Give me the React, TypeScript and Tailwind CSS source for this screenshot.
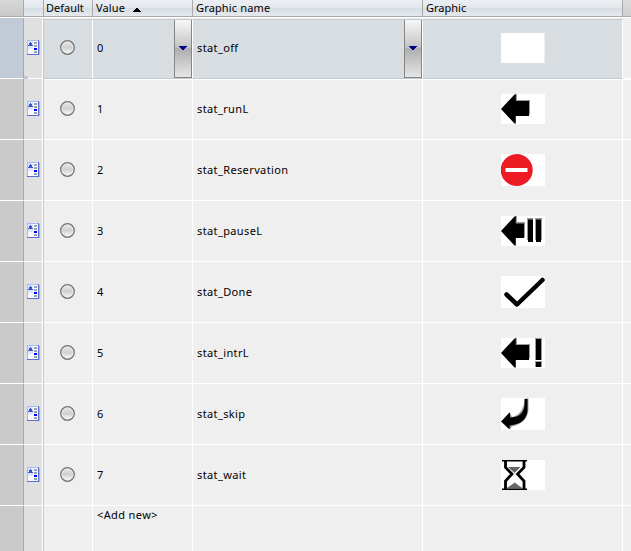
import type { ReactNode } from 'react';

const GRID = 'grid grid-cols-[24px_20px_49px_100px_230px_200px_8px]';

function ElementIcon() {
  return (
    <svg width="14" height="16" viewBox="0 0 14 16" shapeRendering="crispEdges">
      <path d="M1 15h12V1h-1v13H1z" fill="#b5b5c0" />
      <rect x="0" y="0" width="12" height="15" fill="#5b6fd0" />
      <rect x="0" y="0" width="11" height="14" fill="#a9b9f2" />
      <rect x="1" y="1" width="10" height="13" fill="#f8f9ff" />
      <rect x="1" y="1" width="5" height="8" fill="#dde5ff" />
      <path d="M3 2h1v1h1v2h1v1H1V5h1V3h1z" fill="#3d54c8" />
      <rect x="7" y="2" width="3" height="2" fill="#98a0b4" />
      <rect x="7" y="5" width="3" height="2" fill="#98a0b4" />
      <rect x="7" y="8" width="3" height="2" fill="#0000ff" />
      <rect x="7" y="11" width="3" height="2" fill="#98a0b4" />
    </svg>
  );
}

function Radio() {
  return (
    <svg width="15" height="15" viewBox="0 0 15 15">
      <defs>
        <linearGradient id="radio-fill" x1="0" y1="0" x2="0" y2="1">
          <stop offset="0" stopColor="#e4e4e4" />
          <stop offset="0.5" stopColor="#d0d0d0" />
          <stop offset="1" stopColor="#f4f4f4" />
        </linearGradient>
      </defs>
      <circle cx="7.5" cy="7.5" r="6.8" fill="#ececec" stroke="#747474" strokeWidth="1.3" />
      <circle cx="7.5" cy="7.5" r="5.2" fill="url(#radio-fill)" />
    </svg>
  );
}

function DropButton() {
  return (
    <span className="flex h-[58px] w-[18px] items-center justify-center border-x border-b border-[#858585] bg-[linear-gradient(#f8f8f8_0%,#c4c4c4_48%,#adadad_49%,#e6e6e6_100%)] pr-px pb-px">
      <svg width="8" height="4" viewBox="0 0 8 4" shapeRendering="crispEdges" className="shrink-0">
        <path d="M0 0h8v1H7v1H6v1H5v1H3V3H2V2H1V1H0z" fill="#00008b" />
      </svg>
    </span>
  );
}

const ARROW = 'M0 15L13.5 0.500H14.800V7H28V22H14.800V29.500H13.500Z';

function Graphic({ height = 30, children }: { height?: number; children?: ReactNode }) {
  return (
    <svg width="44" height={height} viewBox={`0 0 44 ${height}`} className="block bg-white">
      {children}
      {!children && <path d="M43.5 0v30" stroke="#eee" />}
    </svg>
  );
}

const rows: { name: string; graphic: ReactNode }[] = [
  { name: 'stat_off', graphic: <Graphic /> },
  {
    name: 'stat_runL',
    graphic: (
      <Graphic>
        <path d="M14 0h2v6h13v14l-2 2V9H14z" fill="#999" />
        <path d={ARROW} />
      </Graphic>
    ),
  },
  {
    name: 'stat_Reservation',
    graphic: (
      <Graphic height={32}>
        <circle cx="15.7" cy="16" r="16" fill="#ed1c24" />
        <path d="M4.500 14h22v4h-22z" fill="#fff" />
      </Graphic>
    ),
  },
  {
    name: 'stat_pauseL',
    graphic: (
      <Graphic>
        <path d="M14 0h2v6h8v15l-2 1V8h-8zM26 2h6v22h-6zM34 2h7v22h-7z" fill="#999" />
        <path d="M0 15L13.500 0.500H14.800V7.500H23V22H14.800V29.500H13.500ZM27 3.500h5v22.500H27zM35 3.500h5v22.500H35z" />
      </Graphic>
    ),
  },
  {
    name: 'stat_Done',
    graphic: (
      <Graphic height={32}>
        <path d="M5.5 18.5L16 28.5L41.5 4" fill="none" stroke="#000" strokeWidth="4.5" strokeLinecap="round" strokeLinejoin="round" />
      </Graphic>
    ),
  },
  {
    name: 'stat_intrL',
    graphic: (
      <Graphic>
        <path d="M14 0h2v6h13v14l-2 2V9H14zM34 0h7v22h-7zM34 23h7v6h-7z" fill="#999" />
        <path d={ARROW} />
        <path d="M35 1h5v21h-5zM35 24h5v5h-5z" />
      </Graphic>
    ),
  },
  {
    name: 'stat_skip',
    graphic: (
      <Graphic height={32}>
        <path d="M24 0.500h3.500V12Q26 25 11 28.500L9 31V14.500L11 19Q22 17 24 0.500z" fill="#999" />
        <path d="M23.500 1H26.500V12Q26 25.500 8.800 27.500V31H8L0 23.500L8.500 14.500H9V19.500Q21.500 19.500 23.500 8z" />
      </Graphic>
    ),
  },
  {
    name: 'stat_wait',
    graphic: (
      <Graphic>
        <path d="M7 7H19.500L13.500 13zM5 28.500Q9 26 13.800 22.500Q18 26 22 28.500z" fill="#666" />
        <path d="M1 0.700H26M1 29.200H26" fill="none" stroke="#000" strokeWidth="1.6" />
        <path d="M4.500 1V7.500L11 14L4.500 21V29M23 1V7.500L16.500 14L23 21V29" fill="none" stroke="#000" strokeWidth="2.8" />
      </Graphic>
    ),
  },
];

function Header() {
  return (
    <div className={`${GRID} h-[17px] border-b border-[#aaa] bg-[linear-gradient(#ebeef2_0%,#e5e9ee_45%,#d6dde5_52%,#e6eaee_100%)] leading-[15px] tracking-[0.15px]`}>
      <div className="border-r border-[#aaa] bg-linear-to-b from-[#d8d8d8] to-[#c9c9c9]" />
      <div className="border-r border-[#aaa]" />
      <div className="border-r border-[#aaa] pl-[2px] tracking-normal">Default</div>
      <div className="flex border-r border-[#aaa] pl-[3px]">
        Value
        <svg width="8" height="4" viewBox="0 0 8 4" shapeRendering="crispEdges" className="mt-2 ml-[8px]">
          <path d="M3 0h2v1h1v1h1v1h1v1H0V3h1V2h1V1h1z" />
        </svg>
      </div>
      <div className="border-r border-[#aaa] pl-[3px]">Graphic name</div>
      <div className="border-r border-[#aaa] pl-[3px] tracking-normal">Graphic</div>
      <div className="bg-linear-to-b from-[#dcdcdc] to-[#cecece]" />
    </div>
  );
}

export default function App() {
  return (
    <div className="flex h-[551px] w-[631px] flex-col overflow-hidden bg-[#efefef] font-['Noto_Sans',sans-serif] text-[11px] text-black">
      <Header />
      {rows.map((row, i) => {
        const selected = i === 0;
        const fill = selected ? 'border-y border-y-[#c1cad3] bg-[#d8dde1] mt-px' : 'border-b border-b-white';
        const lift = selected ? 'pb-[2px]' : '';
        return (
          <div key={row.name} className={`${GRID} relative shrink-0 tracking-[0.38px] ${selected ? 'h-[62px] border-t border-white' : 'h-[61px]'}`}>
            <div className={`border-r border-r-[#aaa] border-b border-b-white ${selected ? 'bg-[#c1cbd7]' : 'bg-[#cacaca]'}`} />
            <div className="flex border-r border-r-[#c8c8c8]">
              <div className={`flex flex-1 items-center border-r border-b border-white bg-[#e0e0e0] pl-[3px] ${selected ? 'pb-px' : ''}`}>
                <ElementIcon />
              </div>
            </div>
            <div className={`flex items-center border-r border-r-white pl-4 ${fill} ${selected ? 'pb-[3px]' : 'pb-px'}`}>
              <Radio />
            </div>
            <div className={`flex items-center justify-between border-r border-r-white pl-1 ${fill}`}>
              <span className={lift}>{i}</span>
              {selected && <DropButton />}
            </div>
            <div className={`flex items-center justify-between border-r border-r-white pl-1 ${fill}`}>
              <span className={lift}>{row.name}</span>
              {selected && <DropButton />}
            </div>
            <div className={`flex items-center justify-center border-r border-r-white pl-px ${fill} ${lift}`}>{row.graphic}</div>
            <div className="border-b border-white" />
            {selected && (
              <>
                <span className="absolute top-[61px] left-[44px] h-px w-[587px] bg-white" />
                <span className="absolute top-[58px] left-[24px] size-1 bg-[#c1cad3]" />
                <span className="absolute top-[59px] left-[28px] h-[3px] w-px bg-white" />
              </>
            )}
          </div>
        );
      })}
      <div className={`${GRID} flex-1`}>
        <div className="border-r border-[#aaa] bg-[#cacaca]" />
        <div className="flex border-r border-[#c8c8c8]">
          <div className="flex-1 border-r border-white bg-[#e0e0e0]" />
        </div>
        <div className="border-r border-white" />
        <div className="border-r border-white pt-px pl-1 leading-4 tracking-[0.38px]">&lt;Add new&gt;</div>
        <div className="border-r border-white" />
        <div className="border-r border-white" />
        <div />
      </div>
    </div>
  );
}
